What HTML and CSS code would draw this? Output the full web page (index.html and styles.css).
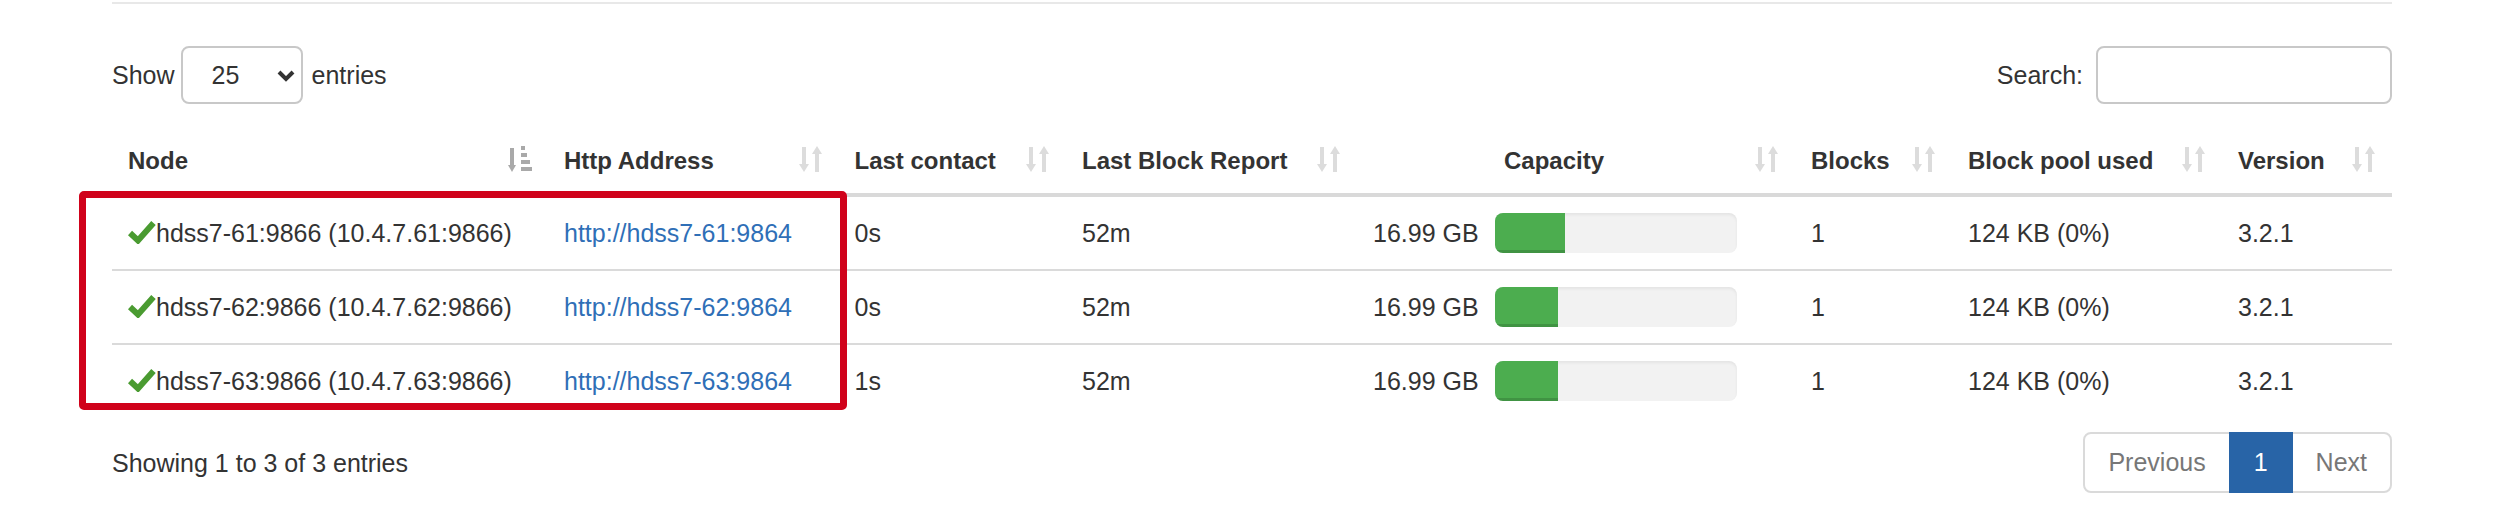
FILE: index.html
```html
<!DOCTYPE html>
<html>
<head>
<meta charset="utf-8">
<link rel="stylesheet" href="styles.css">
</head>
<body>
<div class="container">
  <div class="rule"></div>
  <div class="controls">
    <label class="length">Show
      <span class="select-wrap">
        <select class="select"><option>25</option></select>
        <svg class="chev" width="18" height="12" viewBox="0 0 18 12"><polyline points="2,2 9,9 16,2" fill="none" stroke="#333" stroke-width="4"/></svg>
      </span>
      entries</label>
    <label class="search">Search:<input class="search-input" type="text"></label>
  </div>

  <div class="table-wrap">
    <table class="dn-table">
      <colgroup>
        <col style="width:436px"><col style="width:290.5px"><col style="width:227.5px"><col style="width:291px">
        <col style="width:438px"><col style="width:157px"><col style="width:270px"><col style="width:170px">
      </colgroup>
      <thead>
        <tr>
          <th>Node<svg class="sort" width="24" height="28" viewBox="0 0 24 28"><g fill="#a9a9a9"><rect x="2" y="3" width="4" height="19"/><polygon points="0,20 8,20 4,27"/><rect x="13" y="1" width="4" height="4"/><rect x="13" y="8" width="6" height="4"/><rect x="13" y="15" width="9" height="4"/><rect x="13" y="22" width="11" height="4"/></g></svg></th>
          <th>Http Address<svg class="sort" width="24" height="28" viewBox="0 0 24 28"><g fill="#dcdcdc"><rect x="3" y="2" width="4" height="19"/><polygon points="0,19 10,19 5,27"/><rect x="16" y="7" width="4" height="20"/><polygon points="13,9 23,9 18,1"/></g></svg></th>
          <th>Last contact<svg class="sort" width="24" height="28" viewBox="0 0 24 28"><g fill="#dcdcdc"><rect x="3" y="2" width="4" height="19"/><polygon points="0,19 10,19 5,27"/><rect x="16" y="7" width="4" height="20"/><polygon points="13,9 23,9 18,1"/></g></svg></th>
          <th>Last Block Report<svg class="sort" width="24" height="28" viewBox="0 0 24 28"><g fill="#dcdcdc"><rect x="3" y="2" width="4" height="19"/><polygon points="0,19 10,19 5,27"/><rect x="16" y="7" width="4" height="20"/><polygon points="13,9 23,9 18,1"/></g></svg></th>
          <th class="center">Capacity<svg class="sort" width="24" height="28" viewBox="0 0 24 28"><g fill="#dcdcdc"><rect x="3" y="2" width="4" height="19"/><polygon points="0,19 10,19 5,27"/><rect x="16" y="7" width="4" height="20"/><polygon points="13,9 23,9 18,1"/></g></svg></th>
          <th>Blocks<svg class="sort" width="24" height="28" viewBox="0 0 24 28"><g fill="#dcdcdc"><rect x="3" y="2" width="4" height="19"/><polygon points="0,19 10,19 5,27"/><rect x="16" y="7" width="4" height="20"/><polygon points="13,9 23,9 18,1"/></g></svg></th>
          <th>Block pool used<svg class="sort" width="24" height="28" viewBox="0 0 24 28"><g fill="#dcdcdc"><rect x="3" y="2" width="4" height="19"/><polygon points="0,19 10,19 5,27"/><rect x="16" y="7" width="4" height="20"/><polygon points="13,9 23,9 18,1"/></g></svg></th>
          <th>Version<svg class="sort" width="24" height="28" viewBox="0 0 24 28"><g fill="#dcdcdc"><rect x="3" y="2" width="4" height="19"/><polygon points="0,19 10,19 5,27"/><rect x="16" y="7" width="4" height="20"/><polygon points="13,9 23,9 18,1"/></g></svg></th>
        </tr>
      </thead>
      <tbody>
        <tr>
          <td class="node"><svg class="ok" width="28" height="24" viewBox="0 0 28 24"><polyline points="2,13 10,20.5 25.5,3" fill="none" stroke="#4a9b31" stroke-width="6"/></svg>hdss7-61:9866 (10.4.7.61:9866)</td>
          <td><a class="link" href="#">http://hdss7-61:9864</a></td>
          <td>0s</td>
          <td>52m</td>
          <td><div class="cap"><span class="cap-text">16.99 GB</span><div class="progress"><div class="bar" style="width:29%"></div></div></div></td>
          <td>1</td>
          <td>124 KB (0%)</td>
          <td>3.2.1</td>
        </tr>
        <tr>
          <td class="node"><svg class="ok" width="28" height="24" viewBox="0 0 28 24"><polyline points="2,13 10,20.5 25.5,3" fill="none" stroke="#4a9b31" stroke-width="6"/></svg>hdss7-62:9866 (10.4.7.62:9866)</td>
          <td><a class="link" href="#">http://hdss7-62:9864</a></td>
          <td>0s</td>
          <td>52m</td>
          <td><div class="cap"><span class="cap-text">16.99 GB</span><div class="progress"><div class="bar" style="width:26%"></div></div></div></td>
          <td>1</td>
          <td>124 KB (0%)</td>
          <td>3.2.1</td>
        </tr>
        <tr>
          <td class="node"><svg class="ok" width="28" height="24" viewBox="0 0 28 24"><polyline points="2,13 10,20.5 25.5,3" fill="none" stroke="#4a9b31" stroke-width="6"/></svg>hdss7-63:9866 (10.4.7.63:9866)</td>
          <td><a class="link" href="#">http://hdss7-63:9864</a></td>
          <td>1s</td>
          <td>52m</td>
          <td><div class="cap"><span class="cap-text">16.99 GB</span><div class="progress"><div class="bar" style="width:26%"></div></div></div></td>
          <td>1</td>
          <td>124 KB (0%)</td>
          <td>3.2.1</td>
        </tr>
      </tbody>
    </table>
    <div class="highlight"></div>
  </div>

  <div class="footer">
    <div class="info">Showing 1 to 3 of 3 entries</div>
    <ul class="pagination">
      <li class="page first">Previous</li>
      <li class="page active">1</li>
      <li class="page last">Next</li>
    </ul>
  </div>
</div>
</body>
</html>
```

FILE: styles.css
```css
html, body {
  margin: 0;
  padding: 0;
  background: #fff;
}
body {
  font-family: "Liberation Sans", Arial, Helvetica, sans-serif;
  font-size: 25px;
  line-height: 40px;
  color: #333;
  padding-left: 6px;
}
.container {
  width: 2280px;
  margin: 0 auto;
}
.rule {
  margin-top: 2px;
  border-top: 2px solid #e8e8e8;
}
.controls {
  margin-top: 42px;
  height: 58px;
  display: flex;
  justify-content: space-between;
  align-items: center;
}
.length, .search {
  display: flex;
  align-items: center;
  font-weight: normal;
}
.select-wrap {
  position: relative;
  display: inline-block;
  width: 122px;
  height: 58px;
  margin: 0 9px 0 6px;
}
.select {
  -webkit-appearance: none;
  appearance: none;
  width: 122px;
  height: 58px;
  box-sizing: border-box;
  border: 2px solid #c8c8c8;
  border-radius: 8px;
  background: #fff;
  font-family: inherit;
  font-size: 25px;
  color: #333;
  padding: 0 0 0 29px;
  outline: none;
}
.chev {
  position: absolute;
  right: 8px;
  top: 24px;
}
.search-input {
  width: 296px;
  height: 58px;
  box-sizing: border-box;
  margin-left: 13px;
  border: 2px solid #c8c8c8;
  border-radius: 8px;
  outline: none;
  font-family: inherit;
  font-size: 25px;
}
.table-wrap {
  position: relative;
  margin-top: 17px;
}
.dn-table {
  width: 2280px;
  table-layout: fixed;
  border-collapse: separate;
  border-spacing: 0;
}
.dn-table th {
  position: relative;
  text-align: left;
  font-weight: bold;
  font-size: 24px;
  padding: 20px 60px 12px 16px;
  line-height: 40px;
  border-bottom: 4px solid #d9d9d9;
  white-space: nowrap;
}
.dn-table th.center {
  text-align: center;
}
.sort {
  position: absolute;
  right: 16px;
  top: 24px;
}
.dn-table td {
  padding: 16px;
  line-height: 40px;
  white-space: nowrap;
  vertical-align: middle;
}
.dn-table tbody tr:not(:last-child) td {
  border-bottom: 2px solid #dadada;
}
.ok {
  vertical-align: -2px;
}
.link {
  color: #2f6fb7;
  text-decoration: none;
}
.cap {
  display: flex;
  align-items: center;
}
.cap-text {
  width: 106px;
}
.progress {
  margin-left: 16px;
  width: 242px;
  height: 40px;
  border-radius: 8px;
  background: #f2f2f2;
  box-shadow: inset 0 2px 3px rgba(0, 0, 0, 0.06);
  overflow: hidden;
}
.bar {
  height: 40px;
  background: #4cad4f;
  box-shadow: inset 0 -3px 0 rgba(0, 0, 0, 0.15);
}
.highlight {
  position: absolute;
  left: -33px;
  top: 70px;
  width: 768px;
  height: 219px;
  box-sizing: border-box;
  border: 7px solid #d0021b;
  border-radius: 5px;
}
.footer {
  margin-top: 15px;
  display: flex;
  justify-content: space-between;
  align-items: center;
}
.pagination {
  list-style: none;
  margin: 0;
  padding: 0;
  display: flex;
}
.page {
  padding: 10px 23px;
  line-height: 37px;
  border: 2px solid #dadada;
  color: #777;
  margin-left: -2px;
}
.page.first {
  margin-left: 0;
  border-radius: 8px 0 0 8px;
}
.page.last {
  border-radius: 0 8px 8px 0;
}
.page.active {
  background: #2864a7;
  border-color: #2864a7;
  color: #fff;
  position: relative;
}
```
